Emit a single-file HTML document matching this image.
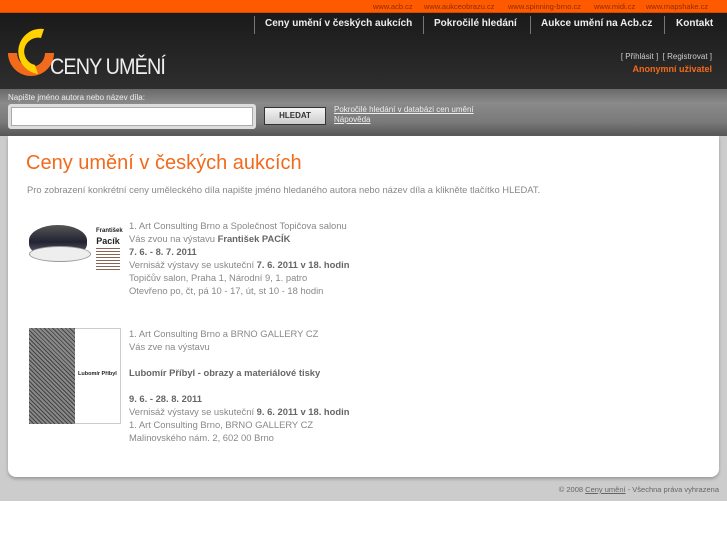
<!DOCTYPE html>
<html><head><meta charset="utf-8"><style>
*{margin:0;padding:0;box-sizing:border-box}
body{width:727px;height:545px;background:#fff;font-family:"Liberation Sans",sans-serif;position:relative;overflow:hidden}
.top{position:absolute;left:0;top:0;width:727px;height:13px;background:#ff5a00;border-bottom:1px solid #d04a00}
.top span{position:absolute;top:2px;font-size:7.5px;color:#8a2e00}
.hdr{position:absolute;left:0;top:13px;width:727px;height:76px;background:linear-gradient(#1a1a1a,#262626 60%,#2e2e2e)}
.nav{position:absolute;top:5px;font-size:10px;font-weight:bold;color:#eee}
.sep{position:absolute;top:3px;width:1px;height:18px;background:#777}
.search{position:absolute;left:0;top:89px;width:727px;height:47px;background:linear-gradient(#6a6a6a,#8a8a8a 30%,#7a7a7a 70%,#555)}
.main{position:absolute;left:0;top:136px;width:727px;height:365px;background:#ccc}
.panel{position:absolute;left:8px;top:0;width:711px;height:341px;background:#fff;border-radius:0 0 8px 8px;box-shadow:0 2px 3px #999}
.t{position:absolute;font-size:9.4px;color:#888;line-height:13px}
.t b{color:#666}
</style></head><body>
<div class="top">
<span style="left:373px">www.acb.cz</span><span style="left:424px">www.aukceobrazu.cz</span><span style="left:508px">www.spinning-brno.cz</span><span style="left:594px">www.midi.cz</span><span style="left:646px">www.mapshake.cz</span>
</div>
<div class="hdr">
<div class="sep" style="left:254px"></div><div class="nav" style="left:265px">Ceny umění v českých aukcích</div>
<div class="sep" style="left:423px"></div><div class="nav" style="left:434px">Pokročilé hledání</div>
<div class="sep" style="left:530px"></div><div class="nav" style="left:541px">Aukce umění na Acb.cz</div>
<div class="sep" style="left:664px"></div><div class="nav" style="left:676px">Kontakt</div>
<svg style="position:absolute;left:6px;top:14px" width="50" height="52" viewBox="0 0 50 52">
<path d="M2 26 A23 23 0 0 0 48 26 L39 26 A14 14 0 0 1 11 26 Z" fill="#f26a1b"/>
<path d="M38 2 A20 20 0 1 0 32 47 L29 38 A11 11 0 1 1 35 11 Z" fill="#ffd200"/>
</svg>
<div style="position:absolute;left:50px;top:41px;font-size:22px;color:#eee;letter-spacing:-1px;transform:scaleX(0.9);transform-origin:left">CENY UMĚNÍ</div>
<div style="position:absolute;right:15px;top:39px;font-size:8px;color:#ccc">[ Přihlásit ]&nbsp; [ Registrovat ]</div>
<div style="position:absolute;right:15px;top:51px;font-size:9px;font-weight:bold;color:#f26a1b">Anonymní uživatel</div>
</div>
<div class="search">
<div style="position:absolute;left:8px;top:4px;font-size:8px;color:#eee">Napište jméno autora nebo název díla:</div>
<div style="position:absolute;left:8px;top:15px;width:248px;height:25px;background:#ddd;border-radius:3px;padding:3px"><div style="background:#fff;height:19px;border:1px solid #aaa"></div></div>
<div style="position:absolute;left:264px;top:18px;width:62px;height:18px;background:linear-gradient(#f4f4f4,#ccc);border:1px solid #333;font-size:8px;font-weight:bold;color:#333;text-align:center;line-height:16px">HLEDAT</div>
<div style="position:absolute;left:334px;top:16px;font-size:8px;color:#eee;text-decoration:underline;line-height:10px">Pokročilé hledání v databázi cen umění<br>Nápověda</div>
</div>
<div class="main">
<div class="panel">
<div style="position:absolute;left:18px;top:16px;font-size:20px;color:#f26a1b">Ceny umění v českých aukcích</div>
<div class="t" style="left:19px;top:47px">Pro zobrazení konkrétní ceny uměleckého díla napište jméno hledaného autora nebo název díla a klikněte tlačítko HLEDAT.</div>
<div style="position:absolute;left:21px;top:89px;width:58px;height:34px;border-radius:50%/45%;background:linear-gradient(#555,#223,#778);"></div>
<div style="position:absolute;left:21px;top:110px;width:62px;height:16px;border-radius:50%;background:#eee;border:1px solid #999"></div>
<div style="position:absolute;left:88px;top:86px;width:24px;height:50px;background:repeating-linear-gradient(#fff 0 2px,#865 2px 3px)"></div>
<div style="position:absolute;left:88px;top:88px;width:24px;font-size:9px;font-weight:bold;color:#222;background:#fff;line-height:10px;text-align:center"><span style="font-size:6px">František</span><br>Pacík</div>
<div class="t" style="left:121px;top:83px">1. Art Consulting Brno a Společnost Topičova salonu<br>Vás zvou na výstavu <b>František PACÍK</b><br><b>7. 6. - 8. 7. 2011</b><br>Vernisáž výstavy se uskuteční <b>7. 6. 2011 v 18. hodin</b><br>Topičův salon, Praha 1, Národní 9, 1. patro<br>Otevřeno po, čt, pá 10 - 17, út, st 10 - 18 hodin</div>
<div style="position:absolute;left:21px;top:192px;width:92px;height:96px;border:1px solid #ccc;background:#fff"></div>
<div style="position:absolute;left:21px;top:192px;width:46px;height:96px;background:repeating-linear-gradient(45deg,#444 0 1px,#888 1px 3px)"></div>
<div style="position:absolute;left:70px;top:235px;font-size:5.5px;font-weight:bold;color:#222">Lubomír Příbyl</div>
<div class="t" style="left:121px;top:191px">1. Art Consulting Brno a BRNO GALLERY CZ<br>Vás zve na výstavu<br><br><b>Lubomír Příbyl - obrazy a materiálové tisky</b><br><br><b>9. 6. - 28. 8. 2011</b><br>Vernisáž výstavy se uskuteční <b>9. 6. 2011 v 18. hodin</b><br>1. Art Consulting Brno, BRNO GALLERY CZ<br>Malinovského nám. 2, 602 00 Brno</div>
</div>
<div style="position:absolute;right:8px;top:349px;font-size:7.5px;color:#666">© 2008 <u>Ceny umění</u> - Všechna práva vyhrazena</div>
</div>
</body></html>
